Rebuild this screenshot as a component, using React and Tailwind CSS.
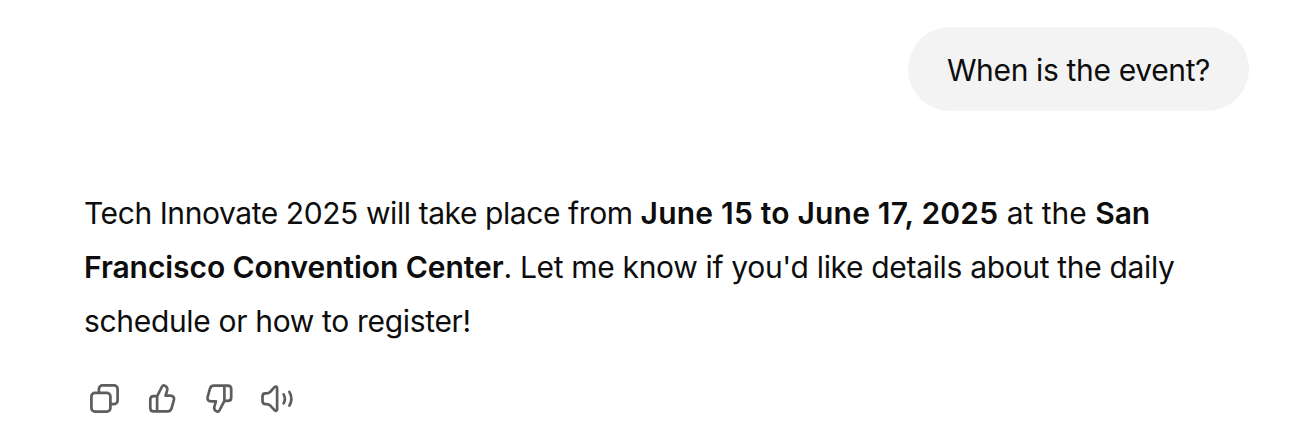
function IconButton({ label, className = 'w-8', children }) {
  return (
    <button type="button" aria-label={label} className={`h-8 shrink-0 ${className}`}>
      {children}
    </button>
  );
}

const iconProps = {
  fill: 'none',
  stroke: 'currentColor',
  strokeWidth: 2.7,
  strokeLinecap: 'round',
  strokeLinejoin: 'round',
};

function CopyIcon() {
  return (
    <svg className="size-8" viewBox="0 0 32 32" {...iconProps}>
      <rect x="3.4" y="9.9" width="19" height="18.8" rx="3.6" />
      <path d="M10.9 9.5V6c0-2 1.6-3.6 3.6-3.6h11.5c2 0 3.6 1.6 3.6 3.6v11.5c0 2-1.6 3.6-3.6 3.6h-3.1" />
    </svg>
  );
}

const thumbPath =
  'M11.1 13.1l5-9.6c.6-1.1 1.6-1.5 2.7-.9 2 1 2.9 2.6 2.4 4.6l-1.6 5.5h4.9c2.6 0 4 1.8 3.4 4.2l-2.3 8.3c-.6 2.1-1.9 3.2-4 3.2H7.8c-2.2 0-3.5-1.3-3.5-3.5V16.6c0-2.2 1.3-3.5 3.5-3.5h3.3v15';

function ThumbUpIcon() {
  return (
    <svg className="size-8" viewBox="0 0 32 32" {...iconProps}>
      <path d={thumbPath} />
    </svg>
  );
}

function ThumbDownIcon() {
  return (
    <svg className="size-8" viewBox="0 0 32 32" {...iconProps}>
      <path d={thumbPath} transform="rotate(180 15.75 15.5)" />
    </svg>
  );
}

function SpeakerIcon() {
  return (
    <svg className="h-8 w-9" viewBox="0 0 36 32" {...iconProps}>
      <path d="M2.5 13.3c0-1.9 1-3 2.8-3h1.3c1.4 0 2.5-.4 3.5-1.3l4.4-4.8c1.1-1.2 2.6-.8 2.6.9v21.2c0 1.7-1.5 2.1-2.6.9l-4.4-4.8c-1-.9-2.1-1.3-3.5-1.3H5.3c-1.8 0-2.8-1.1-2.8-3z" />
      <path d="M23.6 11.3c1.6 2.8 1.6 6.2 0 9M29.4 8.9c2.5 4.4 2.5 9.4 0 13.8" />
    </svg>
  );
}

function App() {
  return (
    <main className="h-[439px] bg-white pt-[27px] pr-[43px] pl-[84px] font-['Inter',sans-serif] text-[30px] text-[#0d0d0d]">
      <div className="flex justify-end">
        <div className="flex h-[84px] w-[341px] items-center justify-center rounded-full bg-[#f3f3f3] pt-0.5 tracking-[-0.35px] whitespace-nowrap">
          When is the event?
        </div>
      </div>

      <p className="mt-[75px] leading-[54px] tracking-[-0.33px] whitespace-nowrap">
        <span className="tracking-[-0.42px]">Tech Innovate 2025 will take place from </span>
        <strong className="font-semibold tracking-[0.2px]">June 15 to June 17, 2025</strong>
        <span className="tracking-normal"> at the </span>
        <strong className="font-semibold tracking-[-0.07px]">
          San
          <br />
          Francisco Convention Center
        </strong>
        . Let me know if you'd like details about the daily
        <br />
        schedule or how to register!
      </p>

      <div className="mt-[35px] ml-1 flex items-center text-[#5d5d5d]">
        <IconButton label="Copy">
          <CopyIcon />
        </IconButton>
        <IconButton label="Good response" className="ml-[26px] w-8">
          <ThumbUpIcon />
        </IconButton>
        <IconButton label="Bad response" className="ml-[26px] w-8">
          <ThumbDownIcon />
        </IconButton>
        <IconButton label="Read aloud" className="ml-6 w-9">
          <SpeakerIcon />
        </IconButton>
      </div>
    </main>
  );
}

export default App;
